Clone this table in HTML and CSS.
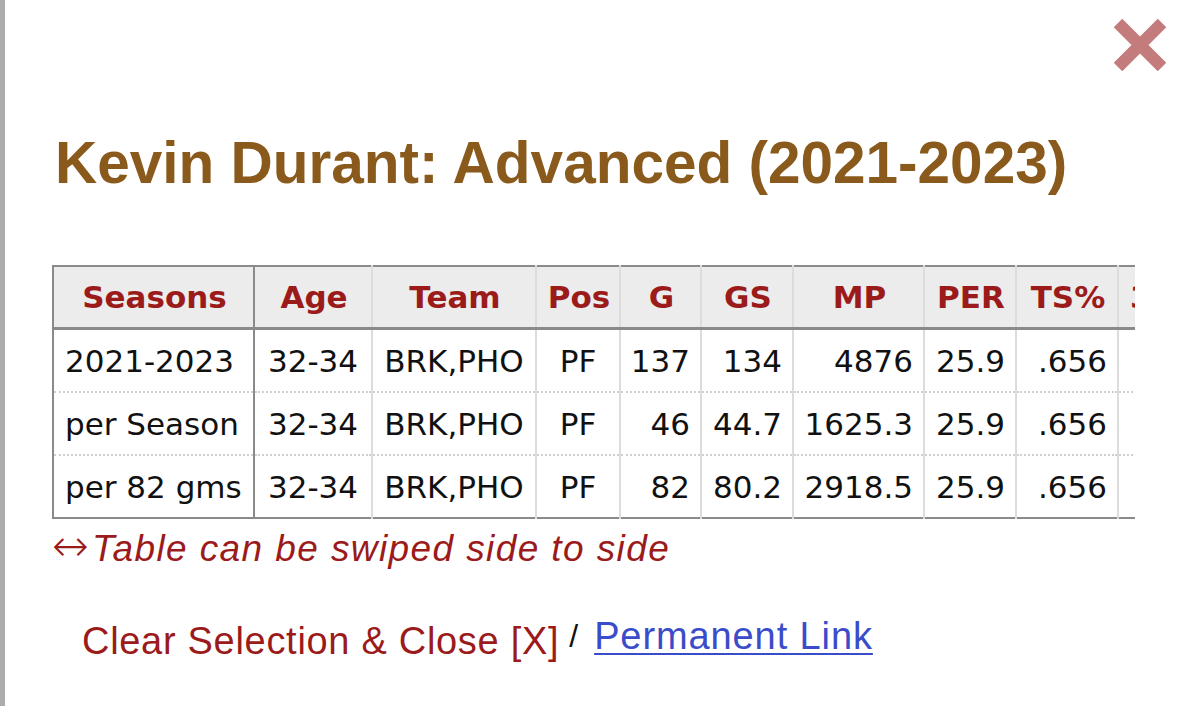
FILE: index.html
```html
<!DOCTYPE html>
<html>
<head>
<meta charset="utf-8">
<link rel="stylesheet" href="styles.css">
<title>Kevin Durant: Advanced</title>
</head>
<body>
<div class="modal">
  <div class="topbar">
    <svg class="close-x" viewBox="0 0 54 54" width="54" height="54" aria-label="Close">
      <line x1="5" y1="5" x2="49" y2="49"/>
      <line x1="49" y1="5" x2="5" y2="49"/>
    </svg>
  </div>
  <h1 class="title">Kevin Durant: Advanced (2021-2023)</h1>
  <div class="table-wrap">
    <table class="stats">
      <colgroup>
        <col class="c-season"><col class="c-age"><col class="c-team"><col class="c-pos"><col class="c-g"><col class="c-gs"><col class="c-mp"><col class="c-per"><col class="c-ts"><col class="c-x">
      </colgroup>
      <thead>
        <tr>
          <th class="first">Seasons</th><th>Age</th><th>Team</th><th>Pos</th><th>G</th><th>GS</th><th>MP</th><th>PER</th><th>TS%</th><th class="next">3PAr</th>
        </tr>
      </thead>
      <tbody>
        <tr>
          <td class="first left">2021-2023</td><td class="center">32-34</td><td class="center">BRK,PHO</td><td class="center">PF</td><td>137</td><td>134</td><td>4876</td><td>25.9</td><td>.656</td><td></td>
        </tr>
        <tr>
          <td class="first left">per Season</td><td class="center">32-34</td><td class="center">BRK,PHO</td><td class="center">PF</td><td>46</td><td>44.7</td><td>1625.3</td><td>25.9</td><td>.656</td><td></td>
        </tr>
        <tr>
          <td class="first left">per 82 gms</td><td class="center">32-34</td><td class="center">BRK,PHO</td><td class="center">PF</td><td>82</td><td>80.2</td><td>2918.5</td><td>25.9</td><td>.656</td><td></td>
        </tr>
      </tbody>
    </table>
  </div>
  <p class="swipe"><span class="arrow">↔</span>Table can be swiped side to side</p>
  <p class="actions"><a class="clear" href="#">Clear Selection &amp; Close [X]</a><span class="sep">/</span><a class="perma" href="#">Permanent Link</a></p>
</div>
</body>
</html>
```
FILE: styles.css
```css
html, body {
  margin: 0;
  padding: 0;
  background: #fff;
}
body {
  width: 1200px;
  height: 706px;
  overflow: hidden;
  font-family: "Liberation Sans", Arial, sans-serif;
}
.modal {
  box-sizing: border-box;
  height: 706px;
  border-left: 5px solid #acacac;
  padding-left: 47px;
  display: flex;
  flex-direction: column;
}
.topbar {
  display: flex;
  justify-content: flex-end;
  padding-top: 18px;
  padding-right: 33px;
  height: 54px;
}
.close-x line {
  stroke: #c47b7b;
  stroke-width: 12;
  stroke-linecap: butt;
}
.title {
  margin: 57px 0 0 3px;
  font-family: "Liberation Sans", Arial, sans-serif;
  font-weight: bold;
  font-size: 58.5px;
  line-height: 1.15;
  color: #8a5a1c;
  white-space: nowrap;
}
.table-wrap {
  margin-top: 69px;
  width: 1083px;
  overflow: hidden;
}
.stats {
  border-collapse: collapse;
  table-layout: fixed;
  width: 1169px;
  font-family: "DejaVu Sans", Verdana, sans-serif;
  font-size: 31px;
  line-height: 36px;
  color: #111;
  border-top: 2px solid #8a8a8a;
  border-bottom: 2px solid #8a8a8a;
  border-left: 2px solid #8a8a8a;
}
.c-season { width: 201px; }
.c-age { width: 118px; }
.c-team { width: 164px; }
.c-pos { width: 84px; }
.c-g { width: 81px; }
.c-gs { width: 92px; }
.c-mp { width: 131px; }
.c-per { width: 92px; }
.c-ts { width: 102px; }
.c-x { width: 104px; }
.stats th {
  background: #ececec;
  color: #9b1b1b;
  font-weight: bold;
  text-align: center;
  padding: 12px 6px 12px 8px;
  border-right: 2px solid #dcdcdc;
  border-bottom: 3px solid #8a8a8a;
  white-space: nowrap;
  overflow: hidden;
}
.stats th.next {
  text-align: left;
  padding-left: 11px;
}
.stats td {
  padding: 13px 10px 12px 6px;
  text-align: right;
  border-right: 2px solid #dcdcdc;
  border-top: 2px dotted #d0d0d0;
  white-space: nowrap;
  overflow: hidden;
}
.stats tbody tr:first-child td {
  border-top: none;
}
.stats .first {
  border-right: 2px solid #8a8a8a;
}
.stats td.left {
  text-align: left;
  padding-left: 11px;
}
.stats td.center {
  text-align: center;
  padding-left: 8px;
  padding-right: 8px;
}
.swipe {
  margin: 5px 0 0 0;
  font-style: italic;
  font-size: 37px;
  line-height: 44px;
  letter-spacing: 1.4px;
  color: #9b1b1b;
  white-space: nowrap;
}
.arrow {
  font-family: "DejaVu Sans", sans-serif;
  font-style: normal;
  font-weight: 200;
  font-size: 44px;
  letter-spacing: 0;
  margin-right: 3px;
}
.actions {
  margin: 43px 0 0 30px;
  font-size: 38px;
  line-height: 44px;
  letter-spacing: 0.7px;
  white-space: nowrap;
}
.clear {
  color: #9b1b1b;
  text-decoration: none;
}
.sep {
  color: #111;
  font-size: 32px;
  letter-spacing: 0;
  margin: 0 16px 0 10px;
  vertical-align: 7px;
}
.perma {
  color: #3a4cc9;
  letter-spacing: 0.9px;
  text-decoration: underline;
  text-underline-offset: 4px;
  text-decoration-thickness: 2px;
  vertical-align: 5px;
}
```
